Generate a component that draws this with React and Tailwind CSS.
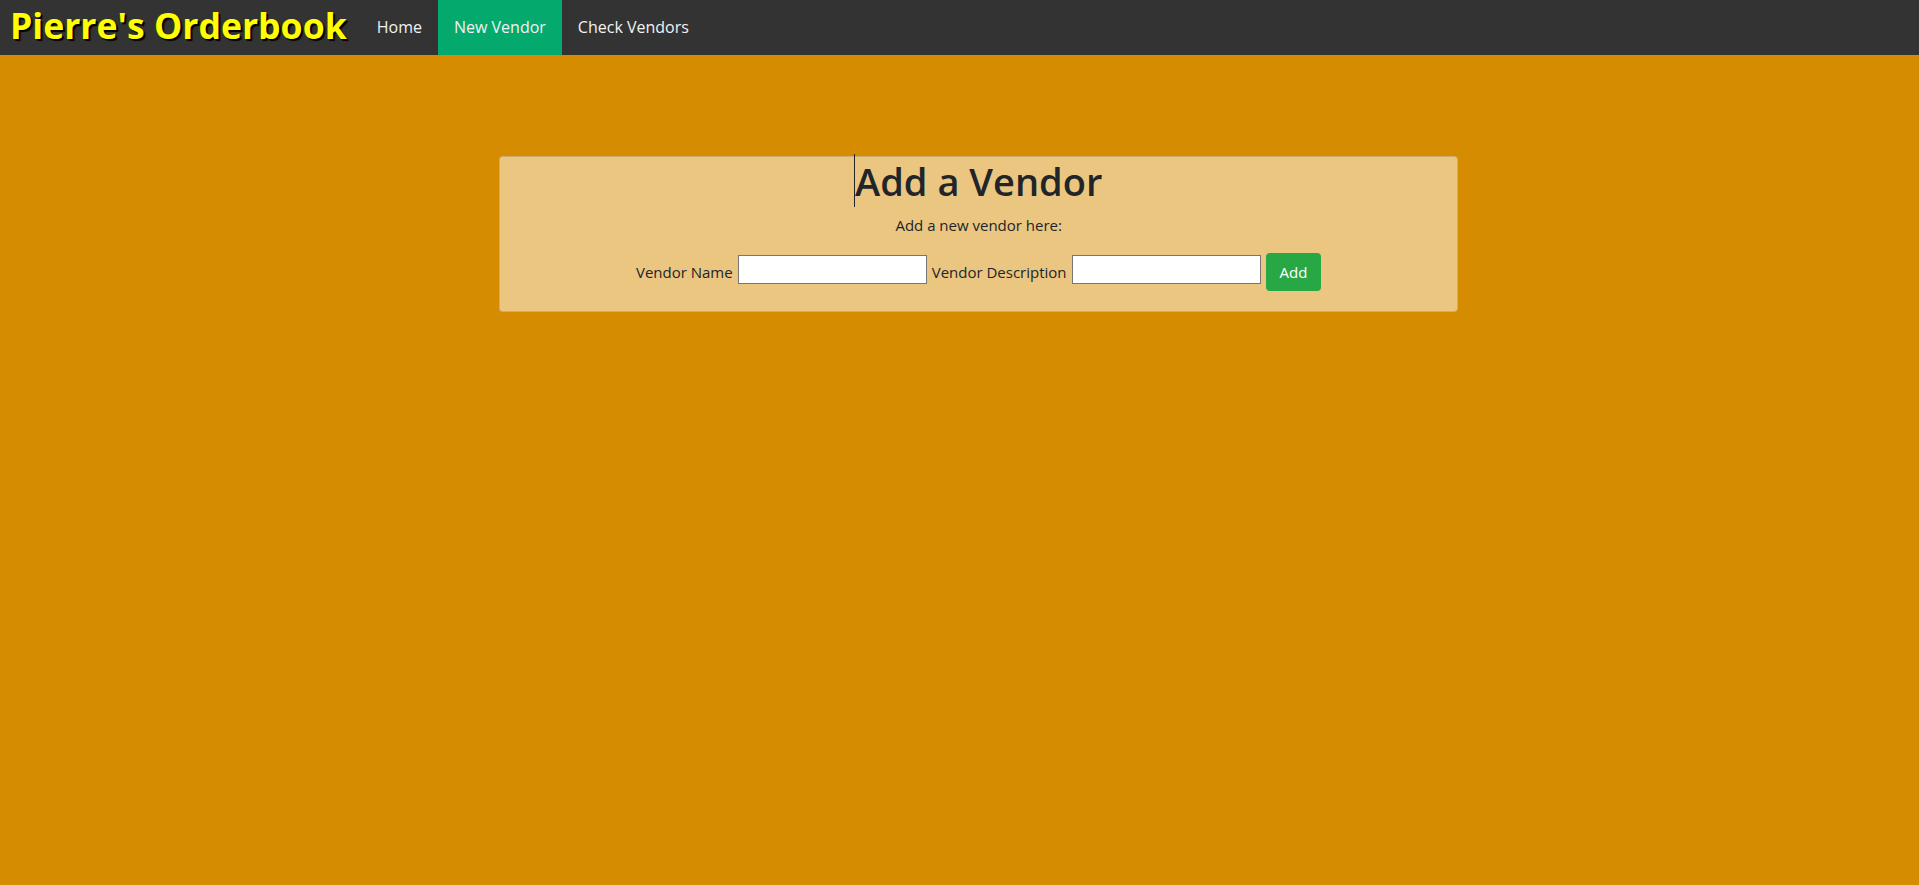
import React from "react";

const navLinks = [
  { label: "Home", active: false },
  { label: "New Vendor", active: true },
  { label: "Check Vendors", active: false },
];

const App = () => {
  return (
    <div className="min-h-screen bg-[#d68c00] font-['Open_Sans','Noto_Sans',sans-serif] text-[#212529]">
      {/* top nav */}
      <nav className="flex h-[55px] items-stretch bg-[#333333]">
        <span className="pl-[10px] pr-[14px] text-[35.6px] leading-[51px] font-bold text-[#ffff00] [text-shadow:2px_2px_1px_#000]">
          Pierre's Orderbook
        </span>
        {navLinks.map((link) => (
          <a
            key={link.label}
            href="#"
            className={
              link.active
                ? "flex items-center px-4 pb-[1px] text-[16px] text-[#f2f2f2] bg-[#04aa6d]"
                : "flex items-center px-4 pb-[1px] text-[16px] text-[#f2f2f2]"
            }
          >
            {link.label}
          </a>
        ))}
      </nav>

      {/* main section */}
      <main className="pt-[101px]">
        <div className="ml-[26%] w-1/2 rounded border border-black/[.125] bg-white/50 pb-5 text-center">
          <h1 className="relative mb-2 inline-block text-[38px] leading-[48px] font-semibold">
            <span className="absolute left-[-1px] top-[-3px] h-[53px] w-px bg-[#212529]" />
            Add a Vendor
          </h1>
          <p className="mb-4 text-[15px] leading-6">Add a new vendor here:</p>
          <form
            className="flex items-center justify-center gap-[5px] text-[15px]"
            onSubmit={(e) => e.preventDefault()}
          >
            <label htmlFor="name">Vendor Name</label>
            <input
              id="name"
              type="text"
              className="mb-[5px] h-[29px] w-[189px] border border-[#767676] bg-white"
            />
            <label htmlFor="description">Vendor Description</label>
            <input
              id="description"
              type="text"
              className="mb-[5px] h-[29px] w-[189px] border border-[#767676] bg-white"
            />
            <button
              type="submit"
              className="h-[38px] rounded bg-[#28a745] px-[14px] text-[15px] text-white"
            >
              Add
            </button>
          </form>
        </div>
      </main>
    </div>
  );
};

export default App;
